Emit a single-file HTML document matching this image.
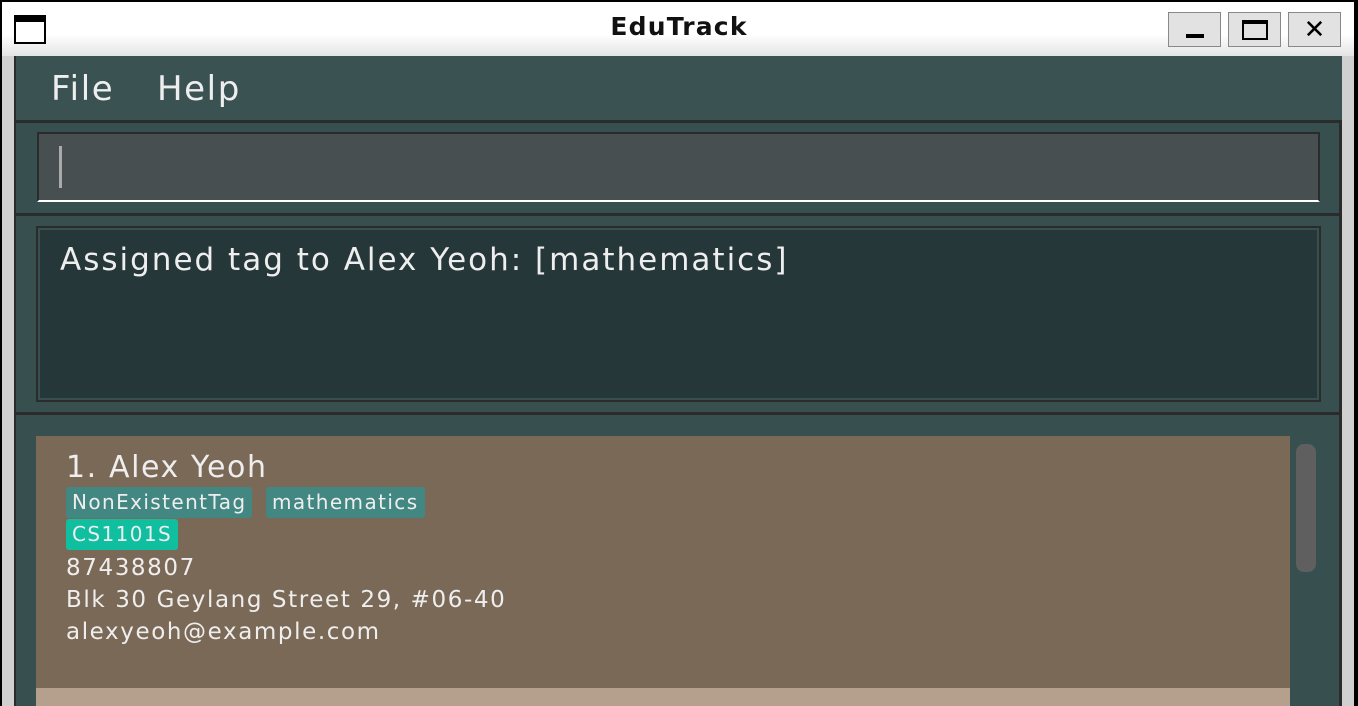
<html><head><style>
body{margin:0;width:1358px;height:706px;overflow:hidden;background:#000;font-family:"DejaVu Sans","Liberation Sans",sans-serif;position:relative}
div{position:absolute;box-sizing:border-box}
</style></head><body>
<div style="left:2px;top:2px;width:1352px;height:704px;background:#d0d0d0"></div>
<div style="left:2px;top:2px;width:1352px;height:54px;background:linear-gradient(#fff 0%,#fff 60%,#e4e4e4 100%)"></div>
<div style="left:14px;top:15px;width:32px;height:29px;border:2px solid #000;border-top:7px solid #000;background:#fff"></div>
<div style="left:0;width:1358px;top:12px;text-align:center;font-weight:bold;font-size:25px;letter-spacing:1.2px;color:#111">EduTrack</div>
<div style="left:1168px;top:12px;width:53px;height:35px;border:1px solid #888;background:#e2e2e2"></div>
<div style="left:1186px;top:34px;width:18px;height:4px;background:#000"></div>
<div style="left:1228px;top:12px;width:53px;height:35px;border:1px solid #888;background:#e2e2e2"></div>
<div style="left:1242px;top:20px;width:26px;height:20px;border:2px solid #000;border-top-width:4px"></div>
<div style="left:1288px;top:12px;width:53px;height:35px;border:1px solid #888;background:#e2e2e2"></div>
<div style="left:1288px;top:13px;width:53px;text-align:center;font-weight:bold;font-size:26px;line-height:34px;color:#000">✕</div>
<div style="left:14px;top:56px;width:1328px;height:650px;background:#37504f;border-left:2px solid #2b2b2b"></div>
<div style="left:16px;top:56px;width:1326px;height:65px;background:#3a5352"></div>
<div style="left:51px;top:69px;font-size:34px;letter-spacing:1.6px;color:#eee">File</div>
<div style="left:157px;top:69px;font-size:34px;letter-spacing:1.6px;color:#eee">Help</div>
<div style="left:16px;top:120px;width:1326px;height:3px;background:#2b2b2b"></div>
<div style="left:1339px;top:120px;width:3px;height:586px;background:#2b2b2b"></div>
<div style="left:37px;top:132px;width:1283px;height:70px;background:#474f51;border:2px solid #2b2b2b;border-bottom:2px solid #fff"></div>
<div style="left:59px;top:146px;width:3px;height:42px;background:#aaa"></div>
<div style="left:16px;top:213px;width:1324px;height:3px;background:#2b2b2b"></div>
<div style="left:36px;top:226px;width:1285px;height:176px;background:#253739;border:2px solid #2b2b2b;box-shadow:inset 0 0 0 2px #37504f"></div>
<div style="left:60px;top:242px;font-size:31px;letter-spacing:2px;color:#eee">Assigned tag to Alex Yeoh: [mathematics]</div>
<div style="left:16px;top:412px;width:1324px;height:3px;background:#2b2b2b"></div>
<div style="left:36px;top:436px;width:1254px;height:252px;background:#7b6957"></div>
<div style="left:36px;top:688px;width:1254px;height:18px;background:#b5a08e"></div>
<div style="left:1296px;top:444px;width:20px;height:128px;background:#5f5f5f;border-radius:8px"></div>
<div style="left:66px;top:450px;font-size:30px;letter-spacing:1.6px;color:#eee">1. Alex Yeoh</div>
<div style="left:66px;top:487px;height:31px;padding:0 6px;background:#438783;border-radius:3px;font-size:20px;letter-spacing:1.4px;line-height:31px;color:#eee">NonExistentTag</div>
<div style="left:266px;top:487px;height:31px;padding:0 6px;background:#438783;border-radius:3px;font-size:20px;letter-spacing:1.4px;line-height:31px;color:#eee">mathematics</div>
<div style="left:66px;top:519px;height:31px;padding:0 6px;background:#10bfa0;border-radius:3px;font-size:20px;letter-spacing:1.4px;line-height:31px;color:#eee">CS1101S</div>
<div style="left:66px;top:552px;font-size:23px;letter-spacing:1.6px;color:#eee;line-height:32px">87438807<br>Blk 30 Geylang Street 29, #06-40<br>alexyeoh@example.com</div>
</body></html>
